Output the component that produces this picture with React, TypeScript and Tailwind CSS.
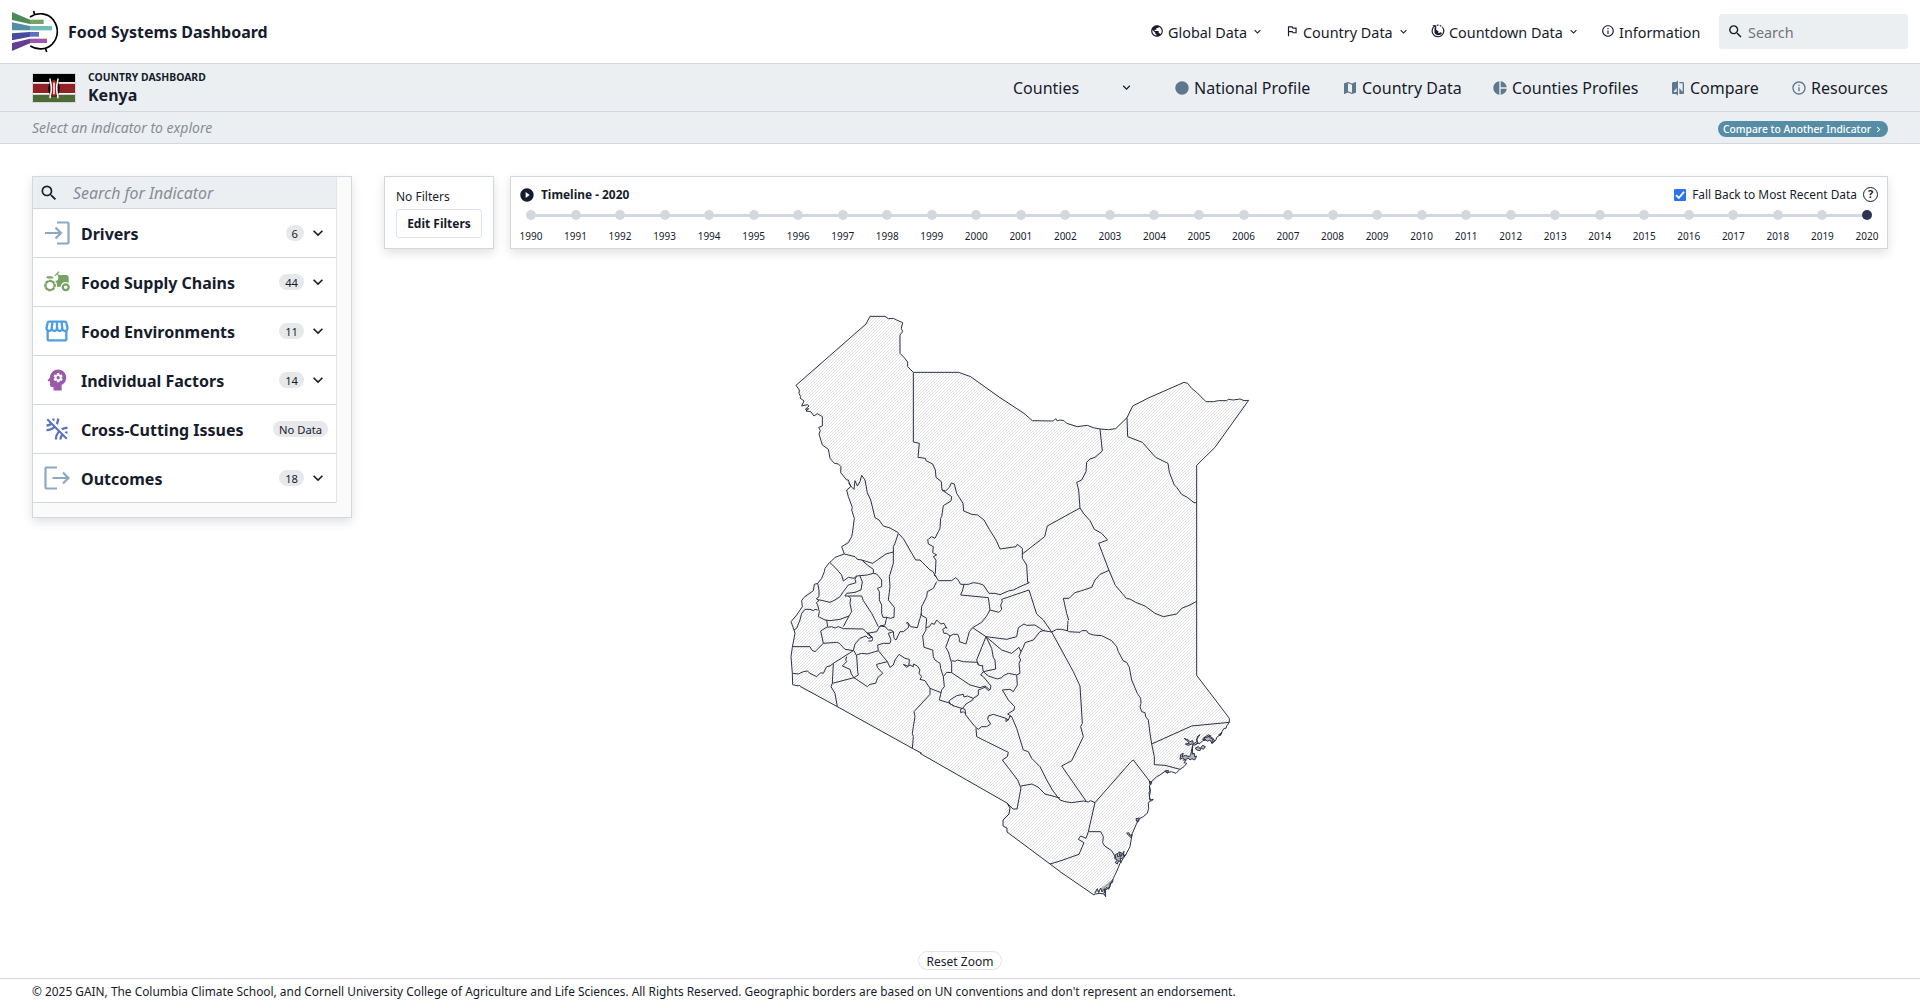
import React from "react";
import {
  MdPublic, MdOutlinedFlag, MdInfoOutline, MdSearch, MdMap, MdPieChart, MdCompare, MdExpandMore,
  MdAgriculture, MdOutlineStorefront, MdPsychology, MdLeakRemove, MdPlayCircleFilled, MdCircle, MdChevronRight,
} from "react-icons/md";

const Logo = () => (
  <svg width="48" height="44" viewBox="33 30 144 132" fill="none">
    <path d="M36 36 90 59V72L36 60Z" fill="#4d8a57" />
    <path d="M90 59H131V72H90Z" fill="#76a363" />
    <path d="M36 67 90 78V91H36Z" fill="#568da6" />
    <path d="M90 78H156V91H90Z" fill="#6fbdb9" />
    <path d="M36 100 90 96V110L36 121Z" fill="#484a9b" />
    <path d="M90 96H117V110H90Z" fill="#5b73bb" />
    <path d="M36 129 90 116V130L36 153Z" fill="#653d91" />
    <path d="M90 116H141V129H90Z" fill="#9c58ab" />
    <path d="M90 51C112 36 144 38 160 60C178 84 175 114 156 133C138 150 112 151 91 138M101 33L104 45M136 143L140 156" stroke="#000" strokeWidth="5" />
  </svg>
);

const Flag = () => (
  <svg width="44" height="30" viewBox="0 0 132 90">
    <path d="M0 0H132V90H0Z" fill="#d3d8df" />
    <path d="M3 3H129V28H3Z" fill="#000" />
    <path d="M3 28H129V65H3Z" fill="#fff" />
    <path d="M3 32H129V60H3Z" fill="#922024" />
    <path d="M3 65H129V87H3Z" fill="#4c6b35" />
    <ellipse cx="66" cy="46" rx="17" ry="26" fill="#000" />
    <ellipse cx="66" cy="46" rx="12" ry="26" fill="#922024" />
    <path d="M54 18L58 40V52L54 74M78 18L74 40V52L78 74M66 30V62" stroke="#fff" strokeWidth="4.5" fill="none" strokeLinecap="round" />
  </svg>
);

const CountdownIcon = () => (
  <svg width="14" height="14" viewBox="0 0 24 24" fill="none" stroke="#161c2c" strokeWidth="2">
    <path d="M7 3.2A10 10 0 1 0 20 6" />
    <path d="M10 2.2A10 10 0 0 1 20 6" strokeDasharray="3 2" />
    <path d="M6 6C8 6 9 8 9 10L13 13 12 16 17 14 19 16C15 21 8 20 6 15Z" fill="#161c2c" stroke="none" />
    <path d="M3 3H8V8" />
  </svg>
);

const EnterIcon = () => (
  <svg width="26" height="24" viewBox="0 0 26 24" fill="none" stroke="#8ba9c4" strokeWidth="2.2">
    <path d="M13 1.5H23.5Q24.5 1.5 24.5 2.5V21.5Q24.5 22.5 23.5 22.5H13" />
    <path d="M1 12H16.5M11.5 6.5L17 12L11.5 17.5" />
  </svg>
);
const LeaveIcon = () => (
  <svg width="26" height="24" viewBox="0 0 26 24" fill="none" stroke="#8ba9c4" strokeWidth="2.2">
    <path d="M13 1.5H2.5Q1.5 1.5 1.5 2.5V21.5Q1.5 22.5 2.5 22.5H13" />
    <path d="M8.5 12H24M19 6.5L24.5 12L19 17.5" />
  </svg>
);

const indicators = [
  { name: "Drivers", count: "6", icon: <EnterIcon /> },
  { name: "Food Supply Chains", count: "44", icon: <MdAgriculture size={28} color="#76a363" /> },
  { name: "Food Environments", count: "11", icon: <MdOutlineStorefront size={28} color="#4f9ee0" /> },
  { name: "Individual Factors", count: "14", icon: <MdPsychology size={28} color="#9c58ab" /> },
  { name: "Cross-Cutting Issues", count: null, icon: <MdLeakRemove size={28} color="#5b73bb" /> },
  { name: "Outcomes", count: "18", icon: <LeaveIcon /> },
];

const years = Array.from({ length: 31 }, (_, i) => 1990 + i);

const outline =
  "M913.3 372.3L907.7 366.7V362L904 357.3 900 353.3V335L902.7 331.7 901.3 328.3 902.7 322.7 896.7 320 888 318 885 316.3H870L866 324 796 385.3 800 396.7 804 401 802 406 806 410 814 416 822.3 417 822 426 819 427.5 822.3 445 828.3 449 830 458 838 464 841 473 850.7 486.7 846.7 490 850.7 501.7 854 518 852 533 843 547 844 554 829.3 562.7 821.7 578 817.7 583 814 584 804 597 802 607 791 621.7 795 633 791 657 792.7 684.7 837 706.7 912.3 748.3 966.7 780 1007 803 1002 820 1007 832 1050 864 1094 895 1107 888 1120 863 1131.7 837 1138 820 1147.3 813 1149 800 1150.7 782.7 1167 771.7 1180 769 1192 755 1205 740 1224 730 1229.3 722 1196.7 675.3V465.3L1215 447.3 1248.7 400.3 1206 401.7 1196.7 392.3 1184 382.3 1148.3 398 1132.7 406 1127 417.7 1115.7 428.7 1100 429 1066.7 423 1032.3 420.7 1024 413.3 970.7 376.7 958.7 372.3Z";

/* County borders, grouped by map tile; tile units are thirds of a pixel. */
const tiles = [
  {
    at: "translate(780 300) scale(.33333)",
    d: "M400 217L383 200 383 186 372 172 360 160 360 105 368 95 364 85 368 68 350 60 340 55 325 56 315 49 270 49 258 72 48 256 58 270 57 280 62 290 60 294 72 303 65 318 82 314 87 318 76 328 86 326 78 333 92 335 102 348 112 341 127 350 127 378 116 382 121 392 117 402 127 435 145 448 150 475 163 490 175 492 183 500 182 518 200 540 205 540 212 560M400 217H536L572 230 660 293M400 217V426L418 430 414 472 436 475 438 482 458 492 466 510 468 532 484 545 486 570 497 573 508 562 514 549 523 552 530 580 549 610 551 633 575 643 593 645 612 660 628 688 648 720 660 747M486 570L515 590 513 603 490 617 485 650 482 655 480 685 465 715 455 710 445 718M205 548L216 562 222 568 225 542 232 558 240 545 245 526 255 540 262 578 272 600 285 653 297 660 310 678 330 684 355 698M212 560L200 570 205 590 217 622 215 630 223 655 217 700",
  },
  {
    at: "translate(1000 350) scale(.33333)",
    d: "M0 143L72 190 97 212 160 213 167 206 172 213 180 210 192 212 200 220 232 230 262 226 280 233 300 237 325 239 347 236 381 203 398 168 445 144 552 97 563 100 575 115 590 127 618 155 640 155 655 152 680 152 685 148 700 150 720 147 732 152 746 151 645 292 590 346V750M300 237L307 303 285 322 270 327 260 337 258 365 245 390 230 397 236 420 240 474 142 528 134 560 67 612M381 203L383 260 427 277 467 322 504 340 508 367 523 405 530 412 545 433 562 442 582 458 590 458M240 474L252 492 270 512 283 538 305 550 323 570 296 580 327 661 346 706 380 746 390 747 407 757 435 768 465 790 490 800 530 792 545 775 570 765 590 754M327 661L300 673 285 690 275 712 245 722 225 728 212 740 207 745 190 745 200 790 206 810M0 597L48 590 52 583 67 595 67 625 80 645 83 697 88 697",
  },
  {
    at: "translate(780 530) scale(.33333)",
    d: "M217 10L215 20 205 38 185 50 193 72 165 82 158 90 148 98 135 115 133 125 125 145 113 160 103 163 100 182 72 202 65 212 67 230 50 255 33 275 42 300 45 310 37 352 33 380 37 430 38 464 55 468 58 465 62 470 172 530 397 655 425 670M193 72L225 80 232 88 245 90 278 100 318 72 340 66 340 50 345 40 355 10 370 26 407 90 420 90M340 66L340 100 328 140 330 170 325 210 343 232 342 262 332 265 320 262 309 262 305 250 305 225 298 210 298 185 292 175 305 170 305 150 290 132 280 130 280 118 262 105 245 90M280 130L262 135 230 138 222 145 205 142 190 153 185 135 165 112 150 98M230 138L225 148 228 158 205 165 190 185 180 200 165 210 150 217 120 210 113 210M240 138L247 155 243 180 225 187 200 190 195 198 245 198 250 212 275 250 295 290M205 198L212 205 210 220 215 245 207 258 180 268 150 272 135 270 115 260 118 245 113 225 109 218 117 212 109 206 117 200 117 180 113 160M113 240L105 238 100 242 90 238 75 238 65 250 60 270 50 295 42 300M207 258L198 275 190 290M140 270L143 290 122 303 130 340 105 365 95 360 90 350 38 350M143 292L155 290 165 294 175 290 190 296 250 297 262 310 290 305 300 288 315 290 325 300 333 300 340 305M320 262L315 285 300 288M130 340L170 337 178 340 195 358 220 362 225 342 240 325 258 318 265 325 277 322 262 312 264 308 278 325 276 333 265 333M220 362L160 400 157 460 153 470 165 490 172 530M160 400L150 408 140 410 130 430 122 428 110 440 90 430 82 423 70 425 55 432 38 430M200 380L197 390 200 395 187 408 210 418 214 432 222 443 157 460M222 362L230 378 233 425 235 435 222 443 262 470 270 463 287 460 293 443 308 430 292 412 290 403 322 395M230 375L245 370 262 372 295 362 322 395 330 412 340 405 345 390 357 373 375 385 388 388 387 405 382 408 370 403 380 412 390 405 400 410 400 402 412 408 420 420 417 430 425 440 420 448 435 452 450 475 450 493 402 545 405 560 400 590 397 610 400 620 397 655M295 362L293 345 310 340 330 340 333 330 325 310 340 305 342 325 348 330 360 305 370 305 385 293 387 285 380 280 382 276 392 290 412 293 420 265 425 250M443 28L445 42 460 50 458 68 470 75 460 80 468 90",
  },
  {
    at: "translate(920 560) scale(.33333)",
    d: "M0 0L30 30 38 34 45 45 55 62 95 62 107 53 113 58 122 73 145 73 160 68 175 70 190 75 207 100 225 100 240 104 265 93 280 90 300 80 328 68M48 0L46 40 42 45 50 52M132 73L128 90 122 105 205 113 210 150M245 118L327 90 350 162 370 180 395 216 460 335 480 378 487 490 482 500 490 530 455 602 425 618M210 150L237 157 245 148 242 135 247 125 245 118M210 150L200 168 185 187 158 203 198 230 260 238 290 230 295 203 312 192 320 196 345 195 370 212 395 216 410 208 425 208 445 213M158 203L148 215 138 252 118 245 118 235 113 223 100 223 90 228 80 220 72 220 68 208 78 202 80 205 72 190 62 192 50 180 43 193 35 190 28 200 18 203M50 65L40 85 22 95 20 110 5 140 3 165 20 175 18 200 18 210 8 228 12 262 38 270 40 290 45 300 60 310 62 325 70 350 73 380 65 390 58 420 85 428 102 438 135 448 137 465 165 500 175 508 185 500 200 500 212 492 203 478 205 468 220 463 258 475 265 480 270 468 275 470 290 505 310 570 325 575 335 595 360 620 380 660M30 385L63 398M90 228L77 262 85 275 95 310 95 338 80 337 70 350M95 302L105 304 112 300 130 305 173 307 175 315 190 318M95 338L150 375 180 383 195 378 210 390 213 378 190 350 182 345 190 335 187 318M198 230L170 300 175 315M198 230L215 265 220 293 225 300 227 327 190 335M198 230L245 270 275 280 297 262 303 275 297 290 302 300 297 310 300 340M303 275L310 262 315 248 340 240 360 215 375 210M190 335L205 348 232 357 245 353 250 347 265 340 290 345 300 340M290 345L292 375 280 395 270 388 247 390 265 420 284 440 282 450 263 462 275 470M258 475L258 485 265 480M85 428L90 420 110 407 130 403 132 411 142 408 160 415 175 405 175 390 185 386 195 382 205 392 210 388M128 445L122 448 122 458 130 455 137 462M128 445L138 432 158 420 160 415M102 438L88 430 88 425M168 505L170 530 200 545 265 577 262 590 247 600 293 660M0 580L140 660",
  },
  {
    at: "translate(1060 600) scale(.33333)",
    d: "M410 0V226L508 355 508 367 500 378 498 385 492 385 480 405 470 412 468 420 455 430 458 418 448 412 452 407 440 412 432 412 428 418 438 420 428 422 420 430 410 430M275 432L395 378 508 367M283 494L315 496 360 508 372 500 380 490 372 488 378 480 368 480M360 508L348 520 335 515 322 518 315 514 300 525 290 530 272 548 274 552 268 558 271 570 267 578 270 600 280 598 276 602 268 604 265 610 266 625 262 640 250 650 240 655 235 660 228 675 217 700 215 710 210 740 197 765 190 775 180 790 172 810 160 835 157 848 150 850 150 860 140 868 136 872 137 890 132 882 120 880 106 882 102 885 0 815M25 95L60 97 65 92 80 92 85 100 100 105 125 107 155 122 170 140 175 155 190 183 200 187 208 202 215 240 232 280 242 295 243 310 240 320 245 335 255 338 257 350 265 360 270 400 275 432 283 470 283 494M220 480L272 548M220 480L213 485 105 608 85 695 122 695 130 710 128 728 134 738 155 752 168 775M105 608L92 602 85 606 70 603 35 608 15 605 0 600M85 695L78 715 62 708 55 718 72 728 57 763 0 783M5 498L78 603M24 62L22 93",
  },
];

/* Creeks and islands along the coast, in the last tile's units. */
const coast =
  "M372 415L385 420 390 425 398 422 400 432 410 425 412 410 420 404 410 418 414 430 402 436 396 432 384 436 376 432 388 430 382 422ZM398 436L397 462 403 460 404 470 410 468 404 480 396 476 390 480 384 474 376 480 368 474 360 478 362 464 370 460 366 470 376 466 388 470 392 464ZM406 444L416 440 420 446 428 436 436 440 430 448 424 444 420 452 410 450ZM432 414L440 408 446 404 452 410 460 416 464 424 456 430 450 420 442 424ZM476 404L486 398 480 408ZM268 544L276 546 270 554ZM316 512L326 512 322 520ZM268 560L271 575 268 590 271 602M228 656L238 654 236 664 230 664ZM200 700L206 698 210 706 216 704 214 714 208 708ZM166 764L174 760 172 770 180 768 176 756 184 758 182 770 192 754 190 768 196 764 186 776 180 774 184 788 176 782 172 792 166 788 172 780 164 776ZM104 880L112 866 116 878 122 864 126 876 134 866 132 880 140 862 146 868 152 852 158 838";

const KenyaMap = () => (
  <svg className="block" width="1504" height="690" viewBox="384 256 1504 690">
    <defs>
      <pattern id="hatch" width="3" height="3" patternUnits="userSpaceOnUse">
        <path d="M-1 1L1 -1M-1 4L4 -1M2 4L4 2" stroke="#cfcfcf" strokeWidth=".65" />
      </pattern>
    </defs>
    <path d={outline} fill="url(#hatch)" />
    <g fill="none" stroke="#2b3145" strokeWidth="3" strokeLinejoin="round">
      {tiles.map((t) => (
        <path key={t.at} d={t.d} transform={t.at} />
      ))}
      <path d={coast} transform="translate(1060 600) scale(.33333)" fill="#2b3145" fillOpacity=".35" />
      <path strokeWidth="1" d="M966.7 780L1007 803 1010 808 1009 814 1003 820 1003 826 1007 828 1007 832 1050 864 1060 871.5M1007 803L1013 809 1017 809 1021 788 1017.7 780M1021 786L1032 784 1038 787 1045 794 1060 798M1046.7 780L1053 791 1060 800M1050 864L1060 861" />
    </g>
  </svg>
);

const topNav = [
  { label: "Global Data", icon: <MdPublic size={14} />, menu: true, w: "w-[135px]" },
  { label: "Country Data", icon: <MdOutlinedFlag size={14} />, menu: true, w: "w-[146px]" },
  { label: "Countdown Data", icon: <CountdownIcon />, menu: true, w: "w-[170px]" },
  { label: "Information", icon: <MdInfoOutline size={14} />, menu: false, w: "w-[118px]" },
];

const subNav = [
  { label: "National Profile", icon: <MdCircle size={16} />, w: "w-[168px]" },
  { label: "Country Data", icon: <MdMap size={16} />, w: "w-[150px]" },
  { label: "Counties Profiles", icon: <MdPieChart size={16} />, w: "w-[178px]" },
  { label: "Compare", icon: <MdCompare size={16} />, w: "w-[121px]" },
  { label: "Resources", icon: <MdInfoOutline size={16} />, w: "w-[97px]" },
];

export default function App() {
  return (
    <div className="flex h-[1002px] w-[1920px] flex-col overflow-hidden bg-white font-['Noto_Sans',sans-serif] text-[#161c2c]">
      <header className="flex h-16 items-center border-b border-[#d3d8df] pl-[11px] pr-3">
        <Logo />
        <h1 className="ml-[9px] text-[16px] font-bold">Food Systems Dashboard</h1>
        <nav className="ml-auto flex text-[14.4px]">
          {topNav.map((n) => (
            <a key={n.label} className={`flex items-center whitespace-nowrap ${n.w}`}>
              {n.icon}
              <span className="ml-1 pt-[2px]">{n.label}</span>
              {n.menu && <MdExpandMore size={13} className="ml-[4px]" />}
            </a>
          ))}
        </nav>
        <div className="flex h-[35px] w-[189px] items-center rounded-[3px] bg-[#ebeff2] pl-2 text-[14.4px] text-[#757575]">
          <MdSearch size={17} color="#161c2c" />
          <span className="ml-1 pt-[2px]">Search</span>
        </div>
      </header>

      <section className="flex h-12 items-center border-b border-[#d3d8df] bg-[#ebeff2] px-8">
        <Flag />
        <div className="ml-3 pt-[2px] leading-none">
          <div className="text-[10.4px] font-bold leading-[13px]">COUNTRY DASHBOARD</div>
          <div className="text-[16px] font-bold leading-[22px]">Kenya</div>
        </div>
        <div className="ml-auto flex w-[161px] items-center text-[16px]">
          <span className="w-[106px]">Counties</span>
          <MdExpandMore size={15} />
        </div>
        <nav className="flex text-[16px]">
          {subNav.map((n) => (
            <a key={n.label} className={`flex items-center whitespace-nowrap ${n.w}`}>
              <span className="text-[#5f778c]">{n.icon}</span>
              <span className="ml-1">{n.label}</span>
            </a>
          ))}
        </nav>
      </section>

      <section className="flex h-8 items-center justify-between border-b border-[#d3d8df] bg-[#ebeff2] px-8">
        <p className="text-[14px] italic text-[#878d96]">Select an indicator to explore</p>
        <button className="mt-[3px] flex h-4 w-[170px] items-center justify-between whitespace-nowrap rounded-full bg-[#568da6] pl-[5px] pr-1 pt-px text-[10.3px] font-medium text-white">
          Compare to Another Indicator
          <MdChevronRight size={11} />
        </button>
      </section>

      <main className="flex h-[834px] px-8 pt-8">
        <aside className="h-[342px] w-80 shrink-0 border border-[#d3d8df] bg-[#fafafa] shadow-[0_4px_10px_rgba(0,0,0,0.12)]">
          <div className="w-[304px] border-r border-[#e3e6ea] bg-white">
            <div className="flex h-8 items-center border-b border-[#d3d8df] bg-[#ebeff2] pl-[6px]">
              <MdSearch size={20} />
              <span className="ml-[14px] pt-[2px] text-[15.9px] italic text-[#878d96]">Search for Indicator</span>
            </div>
            {indicators.map((it) => (
              <div key={it.name} className="flex h-[49px] items-center border-b border-[#d3d8df] pl-[10px] pr-2">
                <span className="flex w-7 justify-center">{it.icon}</span>
                <span className="ml-[10px] pt-[2px] text-[16px] font-bold">{it.name}</span>
                <span className={`ml-auto flex h-4 items-center rounded-full bg-[#e6e8ea] px-[6px] pt-[2px] text-[11.2px] ${it.count ? "mr-1" : ""}`}>
                  {it.count ?? "No Data"}
                </span>
                {it.count && <MdExpandMore size={20} />}
              </div>
            ))}
          </div>
        </aside>

        <div className="ml-8 flex flex-1 flex-col">
          <div className="flex gap-4">
            <div className="h-[73px] w-[110px] border border-[#d3d8df] pl-[11px] pt-[11px] shadow-[0_4px_10px_rgba(0,0,0,0.12)]">
              <div className="text-[12px] leading-[18px]">No Filters</div>
              <button className="mt-[3px] h-[29px] w-[86px] rounded-[3px] border border-[#dfe4ea] text-[12px] font-bold">Edit Filters</button>
            </div>
            <div className="h-[73px] flex-1 border border-[#d3d8df] shadow-[0_4px_10px_rgba(0,0,0,0.12)]">
              <div className="flex h-[33px] items-center pl-[8px] pr-[9px] pt-[2px] text-[11.9px]">
                <MdPlayCircleFilled size={16} />
                <span className="ml-[6px] font-bold">Timeline - 2020</span>
                <span className="ml-auto mr-[6px] flex h-3 w-3 items-center justify-center rounded-[1px] bg-[#2f72f0]">
                  <svg width="10" height="10" viewBox="0 0 10 10" fill="none" stroke="#fff" strokeWidth="1.8">
                    <path d="M1 5.2L3.8 8L9 1.8" />
                  </svg>
                </span>
                <span>Fall Back to Most Recent Data</span>
                <span className="ml-[6px] flex h-[15px] w-[15px] items-center justify-center rounded-full border border-[#161c2c] text-[11px] font-bold">?</span>
              </div>
              <div className="relative flex justify-between">
                <div className="absolute left-5 right-5 top-[4px] h-[3px] bg-[#d3d8df]" />
                {years.map((y) => (
                  <div key={y} className="relative -mx-[1px] flex w-[42px] shrink-0 flex-col items-center">
                    <span className={`h-[10px] w-[10px] rounded-full ${y === 2020 ? "bg-[#2e3454]" : "bg-[#d3d8df]"}`} />
                    <span className="mt-[8px] text-[10px] leading-[16px]">{y}</span>
                  </div>
                ))}
              </div>
            </div>
          </div>
          <div className="mt-[7px] h-[690px] shrink-0">
            <KenyaMap />
          </div>
          <div className="mt-[5px] flex justify-center">
            <button className="mr-[352px] h-[19px] w-[84px] rounded-full border border-[#dfe4ea] bg-white pt-[2px] text-[12px] leading-[15px]">Reset Zoom</button>
          </div>
        </div>
      </main>

      <footer className="flex h-6 items-center border-t border-[#d3d8df] px-8 pt-[3px] text-[11.9px]">
        © 2025 GAIN, The Columbia Climate School, and Cornell University College of Agriculture and Life Sciences. All Rights Reserved. Geographic borders are based on UN conventions and don't represent an endorsement.
      </footer>
    </div>
  );
}
